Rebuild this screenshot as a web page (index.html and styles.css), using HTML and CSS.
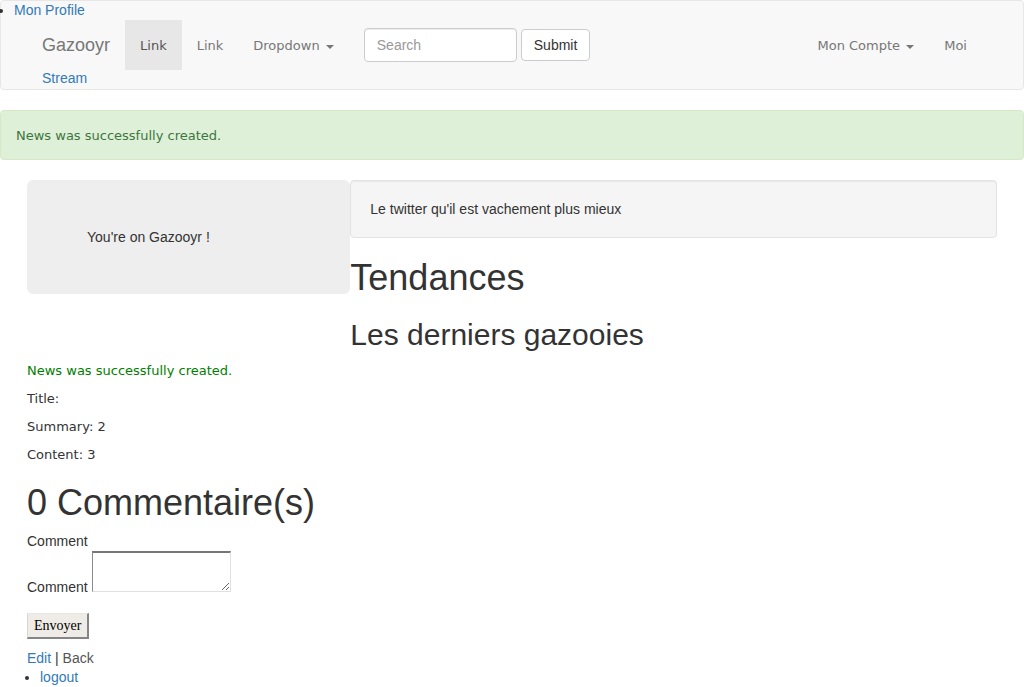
FILE: index.html
```html
<!DOCTYPE html>
<html>
<head>
<meta charset="utf-8">
<title>Gazooyr</title>
<link rel="stylesheet" href="styles.css">
</head>
<body>
<nav class="navbar">
  <ul class="profile-list">
    <li><a href="#" class="link">Mon Profile</a></li>
  </ul>
  <div class="nav-row">
    <a href="#" class="brand">Gazooyr</a>
    <ul class="nav">
      <li><a href="#" class="nav-item active">Link</a></li>
      <li><a href="#" class="nav-item">Link</a></li>
      <li><a href="#" class="nav-item">Dropdown <span class="caret"></span></a></li>
    </ul>
    <form class="nav-form">
      <input type="text" class="search" placeholder="Search">
      <button type="button" class="btn">Submit</button>
    </form>
    <ul class="nav nav-right">
      <li><a href="#" class="nav-item">Mon Compte <span class="caret"></span></a></li>
      <li><a href="#" class="nav-item">Moi</a></li>
    </ul>
  </div>
  <div class="stream-row"><a href="#" class="link">Stream</a></div>
</nav>

<div class="alert">News was successfully created.</div>

<div class="container">
  <div class="row">
    <div class="hero">You're on Gazooyr !</div>
    <div class="main-col">
      <div class="well"><p class="well-text">Le twitter qu'il est vachement plus mieux</p></div>
      <h1 class="h1">Tendances</h1>
      <h2 class="h2">Les derniers gazooies</h2>
    </div>
  </div>

  <p class="notice">News was successfully created.</p>
  <p class="info">Title:</p>
  <p class="info">Summary: 2</p>
  <p class="info">Content: 3</p>

  <h1 class="h1 comments-title">0 Commentaire(s)</h1>
  <form class="comment-form">
    <div class="field-label">Comment</div>
    <div class="field"><label class="field-label-inline">Comment</label> <textarea class="comment-area"></textarea></div>
    <div class="actions"><button type="button" class="submit-btn">Envoyer</button></div>
  </form>
  <div class="links"><a href="#" class="link">Edit</a> | <a href="#" class="back">Back</a></div>
</div>
<ul class="logout-list">
  <li><a href="#" class="link">logout</a></li>
</ul>
</body>
</html>
```

FILE: styles.css
```css
* { box-sizing: border-box; }
body {
  margin: 0;
  font-family: "Liberation Sans", Arial, sans-serif;
  font-size: 14px;
  line-height: 20px;
  color: #333;
  background: #fff;
}
a { text-decoration: none; }
.link { color: #337ab7; }

/* navbar */
.navbar {
  border: 1px solid #e7e7e7;
  background: #f8f8f8;
  border-radius: 4px;
  margin-bottom: 20px;
  height: 90px;
}
.profile-list {
  margin: 0;
  padding-left: 13px;
  line-height: 19px;
  list-style: disc;
}
.nav-row {
  display: flex;
  align-items: center;
  height: 50px;
  padding: 0 41px 0 26px;
}
.brand {
  padding: 0 15px;
  font-size: 18px;
  line-height: 50px;
  color: #777;
}
.nav {
  display: flex;
  margin: 0;
  padding: 0;
  list-style: none;
}
.nav-item {
  display: block;
  padding: 2px 15px 0;
  height: 50px;
  line-height: 48px;
  font-family: "DejaVu Sans", Verdana, sans-serif;
  font-size: 13px;
  color: #777;
}
.nav-item.active {
  background: #e7e7e7;
  color: #555;
}
.caret {
  display: inline-block;
  width: 0;
  height: 0;
  margin-left: 2px;
  vertical-align: middle;
  border-top: 4px solid;
  border-left: 4px solid transparent;
  border-right: 4px solid transparent;
}
.nav-form {
  display: flex;
  align-items: center;
  gap: 4px;
  padding: 0 15px;
  margin: 0;
}
.search {
  width: 153px;
  height: 34px;
  padding: 6px 12px;
  font-family: "Liberation Sans", Arial, sans-serif;
  font-size: 14px;
  color: #555;
  background: #fff;
  border: 1px solid #ccc;
  border-radius: 4px;
  box-shadow: inset 0 1px 1px rgba(0,0,0,.075);
}
.search::placeholder { color: #999; }
.btn {
  height: 32px;
  padding: 0 12px;
  font-family: "Liberation Sans", Arial, sans-serif;
  font-size: 14px;
  color: #333;
  background: #fff;
  border: 1px solid #ccc;
  border-radius: 4px;
}
.nav-right { margin-left: auto; }
.stream-row {
  padding-left: 41px;
  line-height: 17px;
}

/* alert */
.alert {
  padding: 16px 15px 14px;
  border: 1px solid #d6e9c6;
  border-radius: 4px;
  background: #dff0d8;
  color: #3c763d;
  font-family: "DejaVu Sans", Verdana, sans-serif;
  font-size: 13px;
  line-height: 18px;
  margin-bottom: 20px;
}

/* content */
.container {
  width: 970px;
  margin: 0 auto;
}
.row {
  display: flex;
  align-items: flex-start;
}
.hero {
  width: 323.33px;
  flex: none;
  height: 114px;
  padding: 47px 60px;
  background: #eee;
  border-radius: 6px;
}
.main-col {
  flex: 1;
  display: flow-root;
}
.well {
  padding: 19px;
  border: 1px solid #e3e3e3;
  border-radius: 4px;
  background: #f5f5f5;
  box-shadow: inset 0 1px 1px rgba(0,0,0,.05);
  margin-bottom: 20px;
}
.well-text {
  margin: 0;
  line-height: 18px;
}
.h1 {
  margin: 20px 0 10px;
  font-size: 36px;
  line-height: 1.1;
  font-weight: 500;
}
.h2 {
  margin: 20px 0 10px;
  font-size: 30px;
  line-height: 1.1;
  font-weight: 500;
}
.notice, .info {
  margin: 0 0 10px;
  padding-top: 1px;
  font-family: "DejaVu Sans", Verdana, sans-serif;
  font-size: 13px;
  line-height: 17px;
}
.notice { color: green; }
.info { color: #333; }

.comment-form { margin: 0; }
.field-label { line-height: 19px; }
.field { line-height: 20px; }
.comment-area {
  width: 139px;
  height: 41px;
  margin: 0;
  vertical-align: baseline;
  border: 1px solid;
  border-color: #767676 #e0e0e0 #e0e0e0 #8a8a8a;
  border-top-width: 2px;
  background: #fff;
}
.actions { margin-top: 16px; }
.submit-btn {
  height: 26px;
  padding: 0 6px;
  font-family: "Liberation Serif", "Times New Roman", serif;
  font-size: 14px;
  color: #000;
  background: #efece7;
  border: 1px solid;
  border-color: #e8e6e2 #858585 #858585 #d8d6d2;
  border-width: 1px 2px 2px 1px;
}
.links {
  margin-top: 9px;
  line-height: 20px;
}
.back { color: #555; }
.logout-list {
  margin: 0;
  padding-left: 40px;
  list-style: disc;
  line-height: 19px;
}
```
